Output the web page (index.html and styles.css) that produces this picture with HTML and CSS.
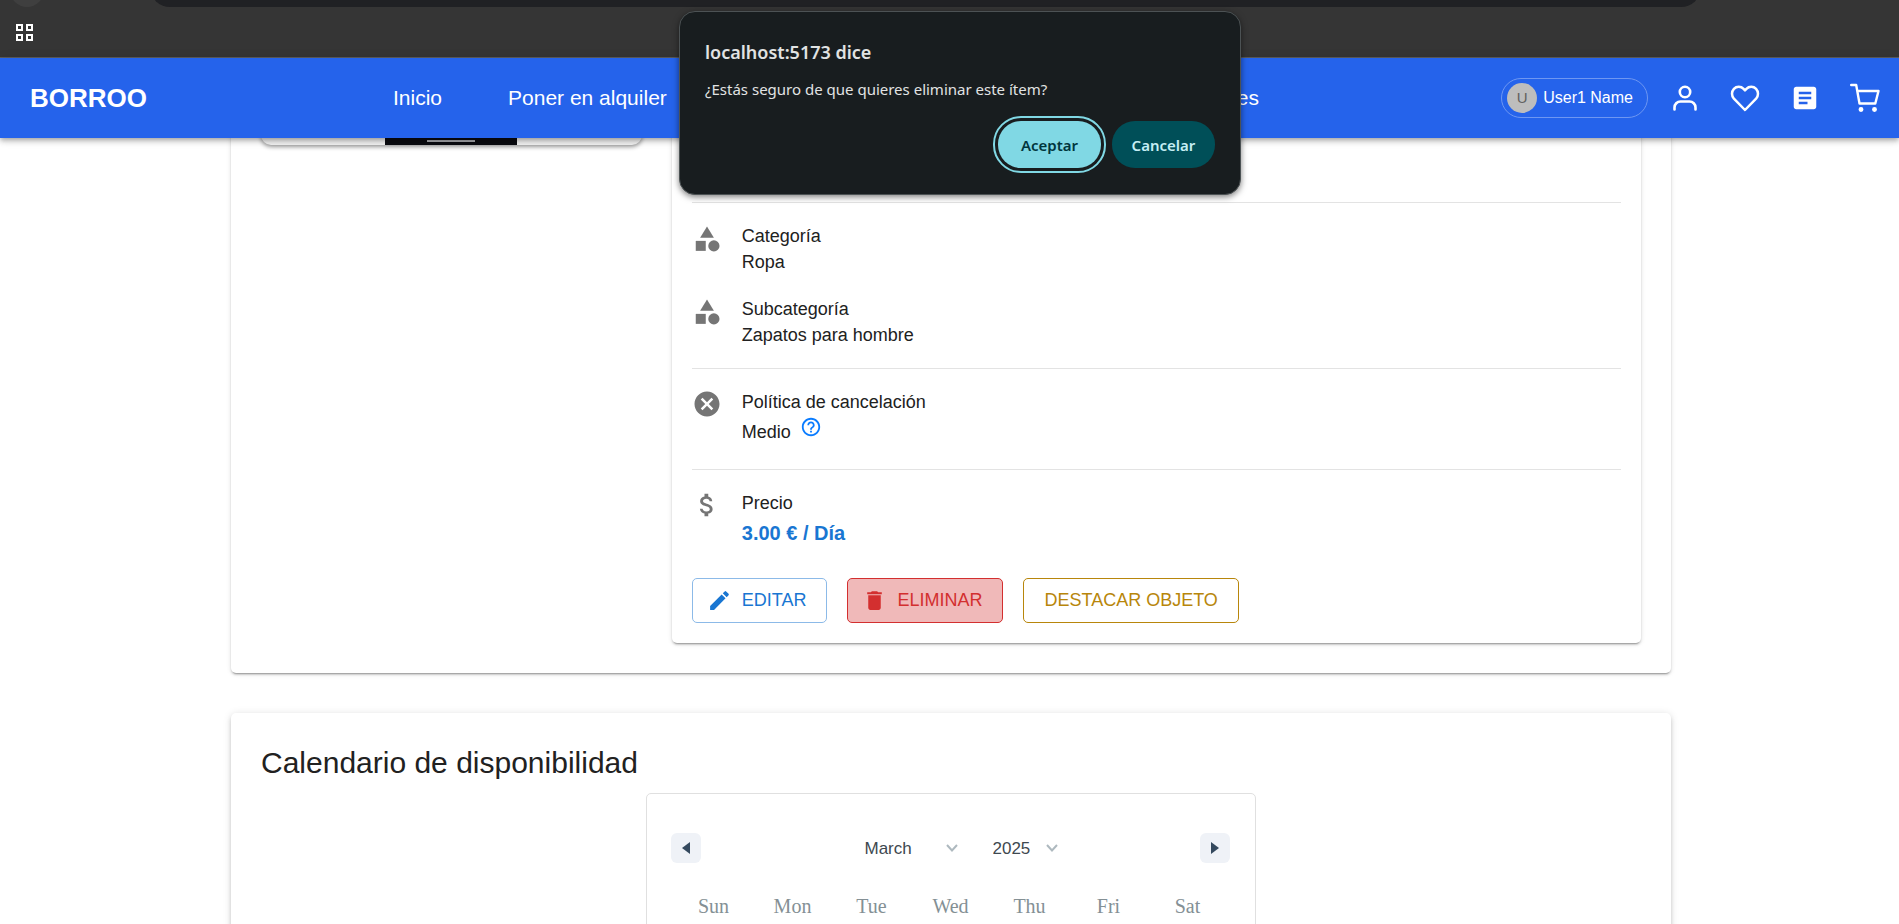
FILE: index.html
```html
<!DOCTYPE html>
<html lang="es">
<head>
<meta charset="utf-8">
<title>Borroo</title>
<link rel="stylesheet" href="styles.css">
</head>
<body>
<div class="browser-bar">
  <div class="browser-round"></div>
  <div class="browser-address"></div>
  <button class="browser-apps" aria-label="Aplicaciones">
    <svg viewBox="0 0 20 20" width="20" height="20" fill="none" stroke="#fff" stroke-width="2"><path d="M3 3h5v5H3zM13 3h5v5h-5zM3 13h5v5H3zM13 13h5v5h-5z"/></svg>
  </button>
</div>

<header class="navbar">
  <a class="brand" href="#">BORROO</a>
  <nav class="nav-links">
    <a href="#">Inicio</a>
    <a href="#">Poner en alquiler</a>
    <a class="nav-last" href="#">Solicitudes</a>
  </nav>
  <div class="nav-actions">
    <button class="user-chip"><span class="avatar">U</span>User1 Name</button>
    <button class="icon-button" aria-label="Perfil">
      <svg viewBox="0 0 30 30" fill="none" stroke="#fff" stroke-width="2.6" stroke-linecap="round"><circle cx="15" cy="9" r="5.2"/><path d="M4.500 26.500v-2a6 6 0 0 1 6-6h9a6 6 0 0 1 6 6v2"/></svg>
    </button>
    <button class="icon-button" aria-label="Favoritos">
      <svg viewBox="0 0 30 30" fill="none" stroke="#fff" stroke-width="2.5" stroke-linejoin="round"><path d="M15 27 3.900 15.600a7.300 7.300 0 0 1 0-9.800 6.700 6.700 0 0 1 9.700 0L15 7.300l1.400-1.500a6.700 6.700 0 0 1 9.700 0 7.300 7.300 0 0 1 0 9.800z"/></svg>
    </button>
    <button class="icon-button" aria-label="Solicitudes">
      <svg viewBox="0 0 24 24" fill="#fff"><path d="M19 3H5c-1.100 0-2 .9-2 2v14c0 1.100.9 2 2 2h14c1.100 0 2-.9 2-2V5c0-1.100-.9-2-2-2zm-5 14H7v-2h7v2zm3-4H7v-2h10v2zm0-4H7V7h10v2z"/></svg>
    </button>
    <button class="icon-button" aria-label="Carrito">
      <svg viewBox="0 0 30 30" fill="none" stroke="#fff" stroke-width="2.400" stroke-linecap="round" stroke-linejoin="round"><path d="M1.200 2h5l3.300 18.500h15.800L28.500 8H7.500"/><circle cx="11" cy="26.500" r="1.700" fill="#fff" stroke-width="1.500"/><circle cx="24.500" cy="26.500" r="1.700" fill="#fff" stroke-width="1.500"/></svg>
    </button>
  </div>
</header>

<main class="page">
  <section class="card item-card">
    <div class="photo"><div class="photo-subject"><span class="photo-bar"></span></div></div>
    <div class="card details">
      <div class="detail-group first-group">
        <div class="detail">
          <svg class="detail-icon" viewBox="0 0 24 24"><path d="m12 2-5.500 9h11z"/><circle cx="17.500" cy="17.500" r="4.500"/><path d="M3 13.500h8v8H3z"/></svg>
          <div><p>Categoría</p><p>Ropa</p></div>
        </div>
        <div class="detail">
          <svg class="detail-icon" viewBox="0 0 24 24"><path d="m12 2-5.500 9h11z"/><circle cx="17.500" cy="17.500" r="4.500"/><path d="M3 13.500h8v8H3z"/></svg>
          <div><p>Subcategoría</p><p>Zapatos para hombre</p></div>
        </div>
      </div>
      <div class="detail-group">
        <div class="detail">
          <svg class="detail-icon" viewBox="0 0 24 24"><path d="M12 2C6.470 2 2 6.470 2 12s4.470 10 10 10 10-4.470 10-10S17.530 2 12 2zm5 13.590L15.590 17 12 13.410 8.410 17 7 15.590 10.590 12 7 8.410 8.410 7 12 10.590 15.590 7 17 8.410 13.410 12 17 15.590z"/></svg>
          <div><p>Política de cancelación</p>
            <div class="policy"><p>Medio</p>
              <button class="help" aria-label="Ayuda"><svg viewBox="0 0 24 24" width="22" height="22" fill="#0a7cff"><path d="M11 18h2v-2h-2v2zm1-16C6.480 2 2 6.480 2 12s4.480 10 10 10 10-4.480 10-10S17.520 2 12 2zm0 18c-4.410 0-8-3.590-8-8s3.590-8 8-8 8 3.590 8 8-3.590 8-8 8zm0-14c-2.210 0-4 1.790-4 4h2c0-1.100.9-2 2-2s2 .9 2 2c0 2-3 1.750-3 5h2c0-2.250 3-2.500 3-5 0-2.210-1.790-4-4-4z"/></svg></button>
            </div>
          </div>
        </div>
      </div>
      <div class="detail-group">
        <div class="detail">
          <svg class="detail-icon" viewBox="0 0 24 24"><path d="M11.800 10.900c-2.270-.59-3-1.200-3-2.150 0-1.090 1.010-1.850 2.700-1.850 1.780 0 2.440.85 2.500 2.100h2.210c-.07-1.720-1.120-3.300-3.210-3.810V3h-3v2.160c-1.940.42-3.500 1.680-3.500 3.610 0 2.310 1.910 3.460 4.700 4.130 2.500.6 3 1.480 3 2.410 0 .69-.49 1.790-2.700 1.790-2.060 0-2.870-.92-2.980-2.100h-2.200c.12 2.190 1.760 3.420 3.680 3.830V21h3v-2.150c1.950-.37 3.500-1.500 3.500-3.550 0-2.840-2.430-3.810-4.700-4.400z"/></svg>
          <div><p>Precio</p><p class="price">3.00 € / Día</p></div>
        </div>
      </div>
      <div class="actions">
        <button class="action edit"><svg viewBox="0 0 24 24"><path d="M3 17.250V21h3.750L17.810 9.940l-3.750-3.750L3 17.250zM20.710 7.040c.39-.39.39-1.020 0-1.410l-2.340-2.340a.996.996 0 0 0-1.410 0l-1.830 1.830 3.750 3.750 1.830-1.830z"/></svg>EDITAR</button>
        <button class="action delete"><svg viewBox="0 0 24 24"><path d="M6 19c0 1.100.9 2 2 2h8c1.100 0 2-.9 2-2V7H6v12zM19 4h-3.500l-1-1h-5l-1 1H5v2h14V4z"/></svg>ELIMINAR</button>
        <button class="action feature">DESTACAR OBJETO</button>
      </div>
    </div>
  </section>

  <section class="card calendar-card">
    <h2>Calendario de disponibilidad</h2>
    <div class="calendar">
      <div class="calendar-head">
        <button class="month-step" aria-label="Mes anterior"><svg viewBox="0 0 8 12" width="8" height="12"><path d="M8 0v12L0 6z"/></svg></button>
        <div class="pickers">
          <label class="picker month"><select aria-label="Mes"><option>March</option></select><svg viewBox="0 0 12 8" width="12" height="8"><path d="m1 1 5 5.500L11 1"/></svg></label>
          <label class="picker year"><select aria-label="Año"><option>2025</option></select><svg viewBox="0 0 12 8" width="12" height="8"><path d="m1 1 5 5.500L11 1"/></svg></label>
        </div>
        <button class="month-step" aria-label="Mes siguiente"><svg viewBox="0 0 8 12" width="8" height="12"><path d="M0 0v12l8-6z"/></svg></button>
      </div>
      <div class="weekdays"><span>Sun</span><span>Mon</span><span>Tue</span><span>Wed</span><span>Thu</span><span>Fri</span><span>Sat</span></div>
    </div>
  </section>
</main>

<div class="dialog" role="alertdialog" aria-labelledby="dialog-title" aria-describedby="dialog-text">
  <h1 id="dialog-title">localhost:5173 dice</h1>
  <p id="dialog-text">¿Estás seguro de que quieres eliminar este ítem?</p>
  <div class="dialog-actions">
    <button class="accept">Aceptar</button>
    <button class="cancel">Cancelar</button>
  </div>
</div>
</body>
</html>
```
FILE: styles.css
```css
* { box-sizing: border-box; }
body {
  margin: 0;
  height: 100vh;
  overflow: hidden;
  background: #fff;
  color: #212121;
  font: 18px/26px "Liberation Sans", Arial, sans-serif;
}
p, h1, h2 { margin: 0; font-weight: 400; }
a { color: inherit; text-decoration: none; }
button { font: inherit; margin: 0; padding: 0; border: 0; background: none; color: inherit; cursor: pointer; }
svg { display: block; }

/* Browser strip */
.browser-bar {
  position: relative;
  height: 58px;
  padding: 22px 14px 0;
  background: #353535;
  border-bottom: 1px solid #5e5e5e;
  overflow: hidden;
}
.browser-round {
  position: absolute;
  top: -27px;
  left: 10px;
  width: 34px;
  height: 34px;
  border-radius: 50%;
  background: #3f3f3f;
}
.browser-address {
  position: absolute;
  top: -33px;
  left: 150px;
  right: 198px;
  height: 40px;
  border-radius: 20px;
  background: #202124;
}

/* Navigation */
.navbar {
  position: relative;
  z-index: 2;
  display: flex;
  align-items: center;
  height: 80px;
  padding: 0 19px 0 30px;
  background: #2563eb;
  color: #fff;
  box-shadow: 0 2px 4px -1px rgba(0,0,0,.2), 0 4px 5px rgba(0,0,0,.14), 0 1px 10px rgba(0,0,0,.12);
}
.brand { width: 363px; font-size: 26px; font-weight: 700; }
.nav-links { display: flex; width: 866px; gap: 66px; font-size: 21px; }
.nav-last { margin-left: auto; }
.nav-actions { display: flex; align-items: center; gap: 30px; margin-left: auto; }
.user-chip {
  display: flex;
  align-items: center;
  gap: 6px;
  height: 40px;
  margin-right: -8px;
  padding: 0 14px 0 5px;
  border: 1px solid #6e97f2;
  border-radius: 20px;
  font-size: 16px;
}
.avatar {
  width: 30px;
  height: 30px;
  border-radius: 50%;
  background: #bdbdbd;
  color: #616161;
  font-size: 15px;
  line-height: 30px;
}
.icon-button, .icon-button svg { width: 30px; height: 30px; }

/* Page */
.page { margin-top: -20px; padding-left: 3px; }
.card {
  background: #fff;
  border-radius: 5px;
  box-shadow: 0 3px 1px -2px rgba(0,0,0,.2), 0 2px 2px rgba(0,0,0,.14), 0 1px 5px rgba(0,0,0,.12);
}
.item-card, .calendar-card { max-width: 1440px; margin: 0 auto; }
.item-card {
  display: grid;
  grid-template-columns: 11fr 28fr;
  align-items: start;
  gap: 30px;
  padding: 0 30px 30px;
}
.photo {
  display: flex;
  justify-content: center;
  height: 27px;
  overflow: hidden;
  border-radius: 0 0 10px 10px;
  background: #f2f2f2;
  box-shadow: 0 2px 4px rgba(0,0,0,.4);
}
.photo-subject { display: flex; justify-content: center; align-items: end; width: 132px; padding-bottom: 3px; background: #0b0c11; }
.photo-bar { width: 48px; height: 2px; background: #a5a6aa; }

/* Item details */
.details { padding: 84px 20px 20px; }
.detail-group { display: grid; gap: 21px; padding: 20px 0; border-top: 1px solid #e3e3e3; }
.detail { display: flex; gap: 20px; }
.detail-icon { flex: none; width: 30px; height: 30px; fill: #757575; }
.first-group .detail-icon { margin-top: 1px; }
.policy { display: flex; align-items: center; gap: 8px; height: 34px; }
.help { display: grid; place-items: center; align-self: start; width: 25px; height: 24px; }
.price { color: #1976d2; font-size: 20px; font-weight: 700; line-height: 34px; }
.actions { display: flex; gap: 20px; margin-top: 8px; }
.action {
  display: flex;
  align-items: center;
  gap: 10px;
  height: 45px;
  padding: 0 20px 1px 19px;
  border: 1px solid;
  border-radius: 5px;
}
.action svg { width: 25px; height: 25px; margin-left: -5px; fill: currentColor; }
.edit { color: #1976d2; border-color: #8cbae8; }
.delete { color: #d32f2f; background: #f0b9b9; }
.feature { padding: 0 20px 1px; color: #b8860b; }

/* Calendar */
.calendar-card { margin-top: 40px; padding: 30px; box-shadow: 0 3px 3px -2px rgba(0,0,0,.2), 0 3px 4px rgba(0,0,0,.14), 0 1px 8px rgba(0,0,0,.12); }
.calendar-card h2 { font-size: 30px; line-height: 40px; }
.calendar { max-width: 610px; min-height: 460px; margin: 10px auto 0; padding: 39px 25px 39px 24px; border: 1px solid #e0e0e0; border-radius: 5px; }
.calendar-head { display: flex; justify-content: space-between; align-items: center; }
.month-step { display: grid; place-items: center; width: 30px; height: 30px; border-radius: 6px; background: #eff2f7; fill: #34495e; }
.pickers { display: flex; gap: 16px; margin-left: 20px; }
.picker { position: relative; }
.picker select {
  width: 100%;
  height: 30px;
  padding: 1px 10px 0;
  border: 0;
  appearance: none;
  background: none;
  color: #3e484f;
  font: 17px/30px "Liberation Sans", Arial, sans-serif;
}
.month { width: 112px; }
.year { width: 84px; }
.picker svg { position: absolute; top: 11px; right: 9px; fill: none; stroke: #aeb9bf; stroke-width: 2; pointer-events: none; }
.weekdays { display: grid; grid-template-columns: repeat(7, 1fr); padding: 30px 3px 0; color: #849095; font: 20px/26px "Liberation Serif", "Times New Roman", serif; text-align: center; }

/* Confirmation dialog */
.dialog {
  position: absolute;
  z-index: 3;
  top: 11px;
  left: 679px;
  width: 562px;
  padding: 27px 25px 26px;
  border: 1px solid #4c5254;
  border-radius: 16px;
  background: #181d1f;
  color: #e1e3e3;
  box-shadow: 0 2px 6px rgba(0,0,0,.5);
  font-family: "Noto Sans", "Open Sans", sans-serif;
}
.dialog h1 { font-size: 18px; font-weight: 600; }
.dialog p { margin-top: 11px; font-size: 15px; }
.dialog-actions { display: flex; justify-content: flex-end; gap: 11px; margin-top: 19px; }
.dialog button { width: 103px; height: 47px; border-radius: 23px; font-size: 15px; font-weight: 600; }
.dialog .accept { background: #80d8e4; color: #00363d; outline: 2px solid #80d8e4; outline-offset: 3px; }
.dialog .cancel { background: #004f58; color: #c5eef4; }
```
